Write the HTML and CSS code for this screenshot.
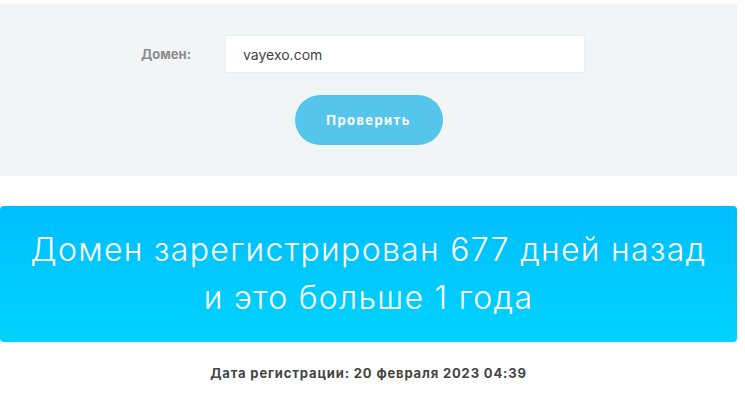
FILE: index.html
```html
<!DOCTYPE html>
<html lang="ru">
<head>
  <meta charset="UTF-8">
  <title>Проверка возраста домена</title>
  <meta name="viewport" content="width=device-width, initial-scale=1.0">
  <link rel="stylesheet" href="styles.css">
</head>
<body>
  <div class="page">
    <form class="check-form">
      <div class="form-row">
        <label for="domain">Домен:</label>
        <input type="text" id="domain" value="vayexo.com">
      </div>
      <button type="submit">Проверить</button>
    </form>

    <div class="result">
      Домен зарегистрирован 677 дней назад<br>и это больше 1 года
    </div>

    <p class="reg-date">Дата регистрации: 20 февраля 2023 04:39</p>
  </div>
</body>
</html>
```

FILE: styles.css
```css
body {
  margin: 0;
  font-family: Inter, "Noto Sans", Arial, sans-serif;
  background-color: #fff;
  color: #444;
}
.page {
  width: 737px;
  padding-top: 4px;
}
.check-form {
  background-color: #f2f5f6;
  height: 172px;
  padding-top: 31px;
  box-sizing: border-box;
  display: flex;
  flex-direction: column;
  align-items: center;
}
.form-row {
  display: flex;
  align-items: center;
  margin-left: -11px;
}
label {
  width: 84px;
  font-size: 13px;
  font-weight: bold;
  color: #8c8c8c;
}
input[type="text"] {
  width: 360px;
  height: 38px;
  padding: 0 17px;
  box-sizing: border-box;
  border: 1px solid #eceeef;
  background: #fff;
  font-family: inherit;
  font-size: 14px;
  color: #444;
  outline: none;
}
button {
  margin-top: 22px;
  width: 148px;
  height: 50px;
  border: none;
  border-radius: 25px;
  background-color: #56c5ec;
  color: #fff;
  font-family: inherit;
  font-size: 13px;
  font-weight: bold;
  letter-spacing: 1.4px;
  cursor: pointer;
}
.result {
  margin-top: 30px;
  height: 136px;
  border-radius: 4px;
  background: linear-gradient(#00befd, #00d3fd);
  color: #fff;
  font-size: 32px;
  font-weight: 300;
  letter-spacing: 1.3px;
  line-height: 48px;
  text-align: center;
  display: flex;
  align-items: center;
  justify-content: center;
}
.reg-date {
  margin: 23px 0 0;
  text-align: center;
  font-size: 13px;
  font-weight: bold;
  letter-spacing: 0.85px;
  color: #444;
}
```
